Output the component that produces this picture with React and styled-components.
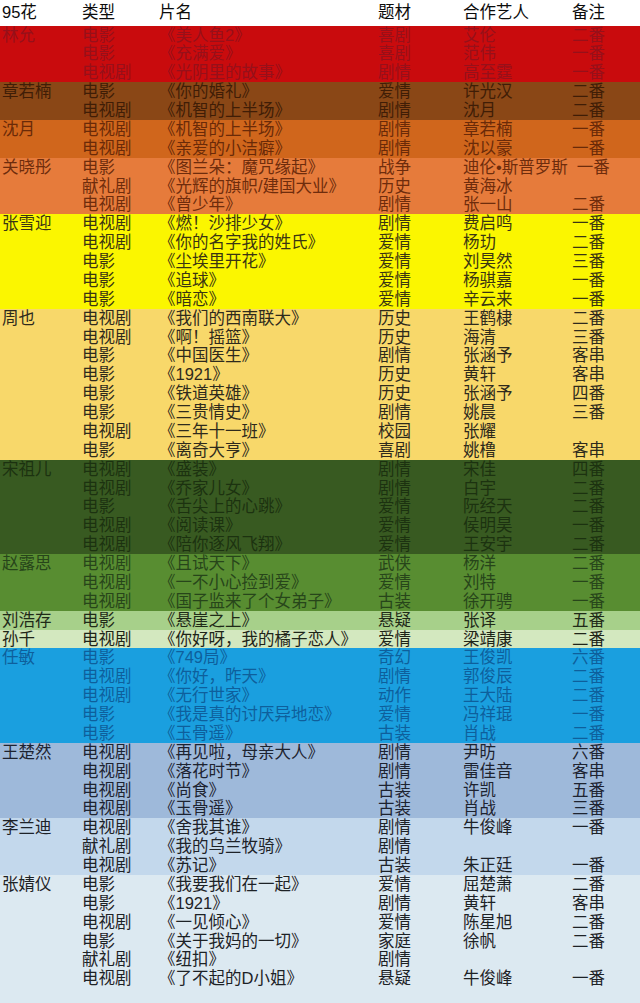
import styled, { createGlobalStyle } from 'styled-components';

const GlobalStyle = createGlobalStyle`
  html, body {
    margin: 0;
    padding: 0;
    background: #dce9f1;
  }
  body {
    font-family: "Liberation Sans", "Noto Sans CJK SC", sans-serif;
  }
`;

const ROW = 18.88;

const bands = [
  { name: '林允', bg: '#c90b0d', fg: '#96101a', rows: [
    ['电影', '《美人鱼2》', '喜剧', '艾伦', '二番'],
    ['电影', '《充满爱》', '喜剧', '范伟', '一番'],
    ['电视剧', '《光阴里的故事》', '剧情', '高至霆', '一番'],
  ]},
  { name: '章若楠', bg: '#8a4716', fg: '#3f1d06', rows: [
    ['电影', '《你的婚礼》', '爱情', '许光汉', '二番'],
    ['电视剧', '《机智的上半场》', '剧情', '沈月', '二番'],
  ]},
  { name: '沈月', bg: '#d0661c', fg: '#6a2a08', rows: [
    ['电视剧', '《机智的上半场》', '剧情', '章若楠', '一番'],
    ['电视剧', '《亲爱的小洁癖》', '剧情', '沈以豪', '一番'],
  ]},
  { name: '关晓彤', bg: '#e67b3b', fg: '#6e2c0c', rows: [
    ['电影', '《图兰朵：魔咒缘起》', '战争', '迪伦•斯普罗斯', '一番'],
    ['献礼剧', '《光辉的旗帜/建国大业》', '历史', '黄海冰', ''],
    ['电视剧', '《曾少年》', '剧情', '张一山', '二番'],
  ]},
  { name: '张雪迎', bg: '#fbf600', fg: '#3a3512', rows: [
    ['电视剧', '《燃！沙排少女》', '剧情', '费启鸣', '一番'],
    ['电视剧', '《你的名字我的姓氏》', '爱情', '杨玏', '二番'],
    ['电影', '《尘埃里开花》', '爱情', '刘昊然', '三番'],
    ['电影', '《追球》', '爱情', '杨骐嘉', '一番'],
    ['电影', '《暗恋》', '爱情', '辛云来', '一番'],
  ]},
  { name: '周也', bg: '#f8d86a', fg: '#2e2a1c', rows: [
    ['电视剧', '《我们的西南联大》', '历史', '王鹤棣', '二番'],
    ['电视剧', '《啊！摇篮》', '历史', '海清', '三番'],
    ['电影', '《中国医生》', '剧情', '张涵予', '客串'],
    ['电影', '《1921》', '历史', '黄轩', '客串'],
    ['电影', '《铁道英雄》', '历史', '张涵予', '四番'],
    ['电影', '《三贵情史》', '剧情', '姚晨', '三番'],
    ['电视剧', '《三年十一班》', '校园', '张耀', ''],
    ['电影', '《离奇大亨》', '喜剧', '姚橹', '客串'],
  ]},
  { name: '宋祖儿', bg: '#385a21', fg: '#1c3210', rows: [
    ['电视剧', '《盛装》', '剧情', '宋佳', '四番'],
    ['电视剧', '《乔家儿女》', '剧情', '白宇', '二番'],
    ['电影', '《舌尖上的心跳》', '爱情', '阮经天', '二番'],
    ['电视剧', '《阅读课》', '爱情', '侯明昊', '一番'],
    ['电视剧', '《陪你逐风飞翔》', '爱情', '王安宇', '二番'],
  ]},
  { name: '赵露思', bg: '#588d31', fg: '#27451a', rows: [
    ['电视剧', '《且试天下》', '武侠', '杨洋', '二番'],
    ['电视剧', '《一不小心捡到爱》', '爱情', '刘特', '一番'],
    ['电视剧', '《国子监来了个女弟子》', '古装', '徐开骋', '一番'],
  ]},
  { name: '刘浩存', bg: '#a7d08a', fg: '#1f2a18', rows: [
    ['电影', '《悬崖之上》', '悬疑', '张译', '五番'],
  ]},
  { name: '孙千', bg: '#d3e8bf', fg: '#1f2418', rows: [
    ['电视剧', '《你好呀，我的橘子恋人》', '爱情', '梁靖康', '二番'],
  ]},
  { name: '任敏', bg: '#1a9fdf', fg: '#0e5f9c', rows: [
    ['电影', '《749局》', '奇幻', '王俊凯', '六番'],
    ['电视剧', '《你好，昨天》', '剧情', '郭俊辰', '二番'],
    ['电视剧', '《无行世家》', '动作', '王大陆', '二番'],
    ['电影', '《我是真的讨厌异地恋》', '爱情', '冯祥琨', '一番'],
    ['电影', '《玉骨遥》', '古装', '肖战', '二番'],
  ]},
  { name: '王楚然', bg: '#9eb9da', fg: '#1d2330', rows: [
    ['电视剧', '《再见啦，母亲大人》', '剧情', '尹昉', '六番'],
    ['电视剧', '《落花时节》', '剧情', '雷佳音', '客串'],
    ['电视剧', '《尚食》', '古装', '许凯', '五番'],
    ['电视剧', '《玉骨遥》', '古装', '肖战', '三番'],
  ]},
  { name: '李兰迪', bg: '#c3d8ec', fg: '#1d2228', rows: [
    ['电视剧', '《舍我其谁》', '剧情', '牛俊峰', '一番'],
    ['献礼剧', '《我的乌兰牧骑》', '剧情', '', ''],
    ['电视剧', '《苏记》', '古装', '朱正廷', '一番'],
  ]},
  { name: '张婧仪', bg: '#dce9f1', fg: '#1d2226', rows: [
    ['电影', '《我要我们在一起》', '爱情', '屈楚萧', '二番'],
    ['电影', '《1921》', '剧情', '黄轩', '客串'],
    ['电视剧', '《一见倾心》', '爱情', '陈星旭', '二番'],
    ['电影', '《关于我妈的一切》', '家庭', '徐帆', '二番'],
    ['献礼剧', '《纽扣》', '剧情', '', ''],
    ['电视剧', '《了不起的D小姐》', '悬疑', '牛俊峰', '一番'],
  ]},
];

const Sheet = styled.div`
  width: 640px;
  min-height: 1003px;
  display: flex;
  flex-direction: column;
  overflow: hidden;
`;

const Line = styled.div`
  display: grid;
  grid-template-columns: 80px 77px 219px 85px 1fr 42px;
  padding: 0 35px 0 2px;
  height: ${p => p.$h || ROW}px;
  font-size: 16.5px;
  line-height: ${p => p.$h || ROW}px;
  white-space: nowrap;
  color: ${p => p.$fg || '#111'};
`;

const HeaderLine = styled(Line)`
  background: #fff;
  color: #0c0c0c;
`;

const Band = styled.div`
  background: ${p => p.$bg};
  flex: ${p => (p.$last ? 1 : 'none')};
`;

const Cell = styled.div`
  display: block;
  height: 100%;
`;

const Note = styled(Cell)`
  justify-self: end;
`;

const columns = ['95花', '类型', '片名', '题材', '合作艺人', '备注'];

export default function App() {
  return (
    <>
      <GlobalStyle />
      <Sheet>
        <HeaderLine $h={25.6}>
          {columns.slice(0, 5).map(c => <Cell key={c}>{c}</Cell>)}
          <Note>{columns[5]}</Note>
        </HeaderLine>
        {bands.map((band, bi) => (
          <Band key={band.name} $bg={band.bg} $last={bi === bands.length - 1}>
            {band.rows.map((r, i) => (
              <Line key={i} $fg={band.fg}>
                <Cell>{i === 0 ? band.name : ''}</Cell>
                <Cell>{r[0]}</Cell>
                <Cell>{r[1]}</Cell>
                <Cell>{r[2]}</Cell>
                <Cell>{r[3]}</Cell>
                <Note>{r[4]}</Note>
              </Line>
            ))}
          </Band>
        ))}
      </Sheet>
    </>
  );
}
